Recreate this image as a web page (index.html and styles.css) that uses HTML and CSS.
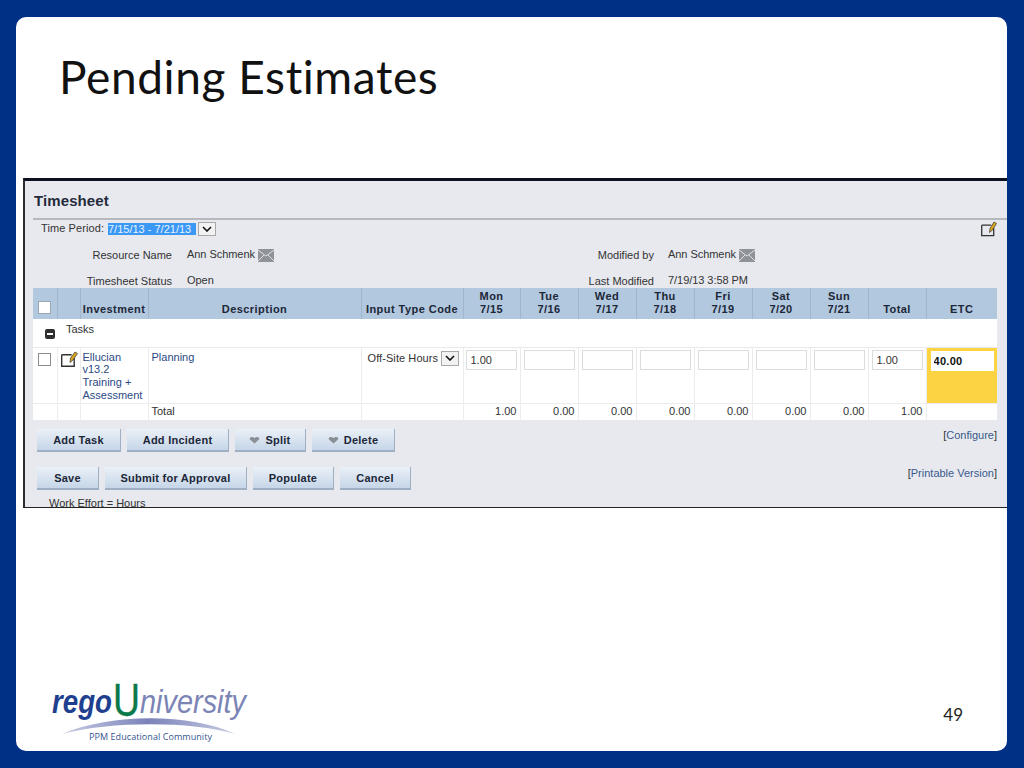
FILE: index.html
```html
<!DOCTYPE html>
<html lang="en">
<head>
<meta charset="utf-8">
<title>Pending Estimates</title>
<link rel="stylesheet" href="styles.css">
</head>
<body>
<main class="slide">
  <h1 class="slide-title">Pending Estimates</h1>
  <section class="panel">
    <h2 class="panel-title">Timesheet</h2>
    <div class="period-row">
      <span class="period-label">Time Period:</span>
      <span class="selected">7/15/13 - 7/21/13</span>
      <span class="arrow-box"><svg width="10" height="6" viewBox="0 0 10 6"><path d="M1 1l4 4 4-4" fill="none" stroke="#111" stroke-width="1.6"/></svg></span>
      <svg class="edit-top" width="16" height="16" viewBox="0 0 16 16"><path d="M.7 4.200h9.500M.7 4.200v10.500h12V7" fill="none" stroke="#333" stroke-width="1.300"/><path d="M8.500 11.500l.5-4 4-6.500 2.500 1.500-4 6.500z" fill="#d9a520" stroke="#333" stroke-width=".7"/></svg>
    </div>
    <div class="meta">
      <span class="m-label">Resource Name</span>
      <span class="m-value">Ann Schmenk <svg class="mail" width="16" height="13" viewBox="0 0 16 13"><rect width="16" height="13" fill="#8f9296"/><path d="M0 1l8 6 8-6M0 12l6-6M16 12l-6-6" fill="none" stroke="#dfe2e6" stroke-width="1"/></svg></span>
      <span class="m-label m-right">Modified by</span>
      <span class="m-value">Ann Schmenk <svg class="mail" width="16" height="13" viewBox="0 0 16 13"><rect width="16" height="13" fill="#8f9296"/><path d="M0 1l8 6 8-6M0 12l6-6M16 12l-6-6" fill="none" stroke="#dfe2e6" stroke-width="1"/></svg></span>
      <span class="m-label">Timesheet Status</span>
      <span class="m-value">Open</span>
      <span class="m-label m-right">Last Modified</span>
      <span class="m-value">7/19/13 3:58 PM</span>
    </div>
    <table class="grid">
      <colgroup>
        <col class="c-check"><col class="c-icon"><col class="c-inv"><col class="c-desc"><col class="c-type">
        <col class="c-day0"><col class="c-day"><col class="c-day"><col class="c-day"><col class="c-day"><col class="c-day"><col class="c-day"><col class="c-day"><col class="c-etc">
      </colgroup>
      <thead>
        <tr>
          <th><span class="check head-check"></span></th><th></th><th>Investment</th><th>Description</th><th>Input Type Code</th>
          <th>Mon<br>7/15</th><th>Tue<br>7/16</th><th>Wed<br>7/17</th><th>Thu<br>7/18</th><th>Fri<br>7/19</th><th>Sat<br>7/20</th><th>Sun<br>7/21</th><th>Total</th><th>ETC</th>
        </tr>
      </thead>
      <tbody>
        <tr class="group-row">
          <td colspan="14"><span class="minus"></span><span class="group-name">Tasks</span></td>
        </tr>
        <tr class="task-row">
          <td><span class="check"></span></td>
          <td class="icon-cell"><svg width="17" height="16" viewBox="0 0 17 16"><path d="M.7 3.700h10M.7 3.700v11.500h12.500V7" fill="none" stroke="#333" stroke-width="1.400"/><path d="M9 11.500l.5-4.500 4.500-6 2.500 1.500-4.500 6.500z" fill="#d9a520" stroke="#333" stroke-width=".7"/></svg></td>
          <td class="link inv">Ellucian v13.2 Training + Assessment</td>
          <td class="link desc">Planning</td>
          <td class="type-cell"><span class="type-value">Off-Site Hours</span><span class="arrow-box"><svg width="10" height="6" viewBox="0 0 10 6"><path d="M1 1l4 4 4-4" fill="none" stroke="#111" stroke-width="1.6"/></svg></span></td>
          <td class="in in-first"><input class="num" value="1.00"></td>
          <td class="in"><input class="num"></td>
          <td class="in"><input class="num"></td>
          <td class="in"><input class="num"></td>
          <td class="in"><input class="num"></td>
          <td class="in"><input class="num"></td>
          <td class="in"><input class="num"></td>
          <td class="in"><input class="num" value="1.00"></td>
          <td class="etc"><input class="num num-etc" value="40.00"></td>
        </tr>
        <tr class="total-row">
          <td></td><td></td><td></td><td class="total-label">Total</td><td></td>
          <td>1.00</td><td>0.00</td><td>0.00</td><td>0.00</td><td>0.00</td><td>0.00</td><td>0.00</td><td>1.00</td><td class="blank"></td>
        </tr>
      </tbody>
    </table>
    <div class="actions first">
      <div class="btns">
        <button class="btn w-add">Add Task</button>
        <button class="btn w-inc">Add Incident</button>
        <button class="btn w-split"><svg class="heart" width="11" height="8" viewBox="0 0 11 8"><path d="M5.500 7.500L1 3.500C0 2 2 .5 3.500 1L5.500 2 7.500 1C9 .5 11 2 10 3.500z" fill="#8a8f96"/></svg>Split</button>
        <button class="btn w-del"><svg class="heart" width="11" height="8" viewBox="0 0 11 8"><path d="M5.500 7.500L1 3.500C0 2 2 .5 3.500 1L5.500 2 7.500 1C9 .5 11 2 10 3.500z" fill="#8a8f96"/></svg>Delete</button>
      </div>
      <a class="side-link">[<span>Configure</span>]</a>
    </div>
    <div class="actions second">
      <div class="btns">
        <button class="btn w-save">Save</button>
        <button class="btn w-submit">Submit for Approval</button>
        <button class="btn w-pop">Populate</button>
        <button class="btn w-cancel">Cancel</button>
      </div>
      <a class="side-link">[<span>Printable Version</span>]</a>
    </div>
    <p class="note">Work Effort = Hours</p>
  </section>
  <footer class="foot">
    <svg class="logo" width="200" height="80" viewBox="0 -12 200 80">
      <defs>
        <linearGradient id="arc" x1="0" x2="1" y1="0" y2="0">
          <stop offset="0" stop-color="#c9cde3"/><stop offset=".5" stop-color="#7a82ba"/><stop offset="1" stop-color="#c9cde3"/>
        </linearGradient>
      </defs>
      <path d="M11 54C60 33 140 33 184 54 140 41 60 41 11 54z" fill="url(#arc)"/>
      <text class="logo-rego" x="1" y="33" textLength="60" lengthAdjust="spacingAndGlyphs">rego</text>
      <text class="logo-u" x="62" y="36" textLength="27" lengthAdjust="spacingAndGlyphs">U</text>
      <text class="logo-rest" x="89" y="33" textLength="106" lengthAdjust="spacingAndGlyphs">niversity</text>
      <text class="logo-sub" x="38" y="60" textLength="123">PPM Educational Community</text>
    </svg>
    <span class="page-no">49</span>
  </footer>
</main>
</body>
</html>
```

FILE: styles.css
```css
* { box-sizing: border-box; }
html, body { margin: 0; height: 100%; }
body {
  background: #002f86;
  overflow: hidden;
  padding: 17px 17px 17px 16px;
  font-family: "Liberation Sans", Arial, sans-serif;
}
.slide {
  height: 734px;
  background: #fff;
  border-radius: 10px;
  display: flex;
  flex-direction: column;
  overflow: hidden;
}
.slide-title {
  margin: 0;
  padding: 31px 0 0 43px;
  height: 161px;
  font: 400 46px/58px Lato, "Open Sans", sans-serif;
  color: #111;
  letter-spacing: .6px;
}
.panel {
  margin-left: 7px;
  height: 330px;
  background: #e7e9ef;
  border-top: 3px solid #0d1020;
  border-left: 2px solid #2a2c30;
  border-bottom: 1px solid #222;
  padding-left: 8px;
  overflow: hidden;
  font-size: 11px;
  color: #333;
}
.panel-title {
  margin: 0;
  height: 39px;
  padding: 11px 0 0 1px;
  font: 700 15px/17px "Liberation Sans", Arial, sans-serif;
  letter-spacing: .1px;
  color: #252b3a;
  border-bottom: 2px solid #b5b8bc;
}
.period-row {
  display: flex;
  align-items: center;
  height: 15px;
  margin-top: 1px;
  padding-left: 8px;
  width: 964px;
  line-height: 13px;
}
.period-label { width: 67px; letter-spacing: .1px; }
.selected {
  background: #3b98f5;
  color: #e8f2ff;
  width: 88px;
  height: 12px;
  line-height: 12px;
  white-space: nowrap;
}
.arrow-box {
  display: inline-flex;
  align-items: center;
  justify-content: center;
  width: 18px;
  height: 14px;
  margin-left: 2px;
  background: #f2f2f2;
  border: 1px solid #a8a8a8;
}
.edit-top { margin-left: auto; margin-top: 1px; }
.meta {
  display: grid;
  grid-template-columns: 139px 281px 170px auto;
  column-gap: 15px;
  grid-auto-rows: 14px;
  row-gap: 12px;
  padding-top: 11px;
  height: 52px;
  width: 964px;
  line-height: 14px;
}
.m-label { text-align: right; padding-top: 1px; white-space: nowrap; }
.m-right { grid-column: 3; margin-right: -1px; }
.m-value { display: flex; align-items: flex-start; gap: 3px; white-space: nowrap; letter-spacing: -.05px; height: 16px; }
.mail { margin-top: 2px; }
.grid {
  table-layout: fixed;
  border-collapse: collapse;
  width: 964px;
  background: #fff;
  font-size: 11px;
}
.c-check { width: 24px; }
.c-icon { width: 23px; }
.c-inv { width: 68px; }
.c-desc { width: 213px; }
.c-type { width: 102px; }
.c-day0 { width: 57px; }
.c-day { width: 58px; }
.c-etc { width: 71px; }
.grid th {
  height: 31px;
  padding: 0 0 3px;
  background: #b2c8de;
  border-left: 1px solid #9fb6cd;
  font-weight: 700;
  line-height: 13px;
  letter-spacing: .45px;
  color: #1c2738;
  vertical-align: bottom;
  text-align: center;
  white-space: nowrap;
}
.grid th:first-child { border-left: 0; }
.check {
  display: block;
  width: 13px;
  height: 13px;
  margin-left: 5px;
  background: #fff;
  border: 1px solid #8c8c8c;
}
.head-check { margin-bottom: 2px; border-color: #9aa7b5; }
.group-row td { height: 28px; padding: 0; border-bottom: 1px solid #e9e9e9; vertical-align: top; }
.minus {
  display: inline-block;
  position: relative;
  width: 10px;
  height: 10px;
  margin: 10px 0 0 12px;
  background: #2f2f2f;
  border-radius: 2px;
  vertical-align: top;
}
.minus::after {
  content: "";
  position: absolute;
  left: 2px;
  right: 2px;
  top: 4px;
  height: 2px;
  background: #fff;
}
.group-name { display: inline-block; margin: 4px 0 0 11px; vertical-align: top; line-height: 13px; }
.task-row td {
  height: 56px;
  padding: 0;
  vertical-align: top;
  border-left: 1px solid #ececec;
  border-bottom: 1px solid #ececec;
}
.task-row td:first-child, .total-row td:first-child { border-left: 0; }
.task-row .check { margin-top: 5px; }
.icon-cell svg { display: block; margin: 3px 0 0 3px; }
.link { color: #2b4a85; line-height: 12.700px; }
.inv { padding: 3px 2px 0 2px !important; }
.desc { padding: 3px 0 0 3px !important; }
.type-cell { white-space: nowrap; padding: 3px 0 0 6px !important; }
.type-value {
  display: inline-block;
  width: 73px;
  height: 15px;
  line-height: 14px;
  vertical-align: top;
  background: #fff;
  letter-spacing: .08px;
}
.type-cell .arrow-box { vertical-align: top; margin-left: 0; height: 15px; }
.in { text-align: left; }
.in .num { margin: 2px 0 0 3px; }
.in-first .num { margin-left: 2px; }
.num {
  display: block;
  width: 51px;
  height: 20px;
  padding: 1px 4px 0;
  border: 1px solid #dcdcdc;
  background: #fff;
  font: 11px "Liberation Sans", Arial, sans-serif;
  color: #333;
}
.etc { background: #fcd443; }
.num-etc {
  width: 63px;
  margin: 3px 0 0 4px;
  border: 0;
  padding-left: 3px;
  font-weight: 700;
  color: #111;
  letter-spacing: .3px;
}
.total-row td {
  height: 17px;
  padding: 0 3px 0 0;
  border-left: 1px solid #ececec;
  text-align: right;
  line-height: 13px;
}
.total-row .total-label { text-align: left; padding-left: 3px; }
.total-row .blank { background: #fff; }
.actions {
  display: flex;
  justify-content: space-between;
  align-items: flex-start;
  width: 964px;
  padding-left: 4px;
}
.first { margin-top: 9px; height: 38px; }
.second { height: 30px; }
.btns { display: flex; gap: 6px; }
.btn {
  display: flex;
  align-items: center;
  justify-content: center;
  gap: 5px;
  height: 23px;
  padding: 0;
  border: 0;
  border-right: 1px solid #9fb0c4;
  border-bottom: 2px solid #9fb0c4;
  background: linear-gradient(#eaf0f7, #c6d6e8);
  font: 700 11px "Liberation Sans", Arial, sans-serif;
  letter-spacing: .25px;
  color: #1c2738;
}
.w-add { width: 84px; }
.w-inc { width: 102px; }
.w-split { width: 71px; }
.w-del { width: 83px; }
.w-save { width: 62px; }
.w-submit { width: 142px; }
.w-pop { width: 81px; }
.w-cancel { width: 71px; }
.side-link { color: #333; line-height: 13px; margin-top: 0; }
.side-link span { color: #3a5a8c; }
.note { margin: 0 0 0 16px; line-height: 13px; white-space: nowrap; }
.foot {
  flex: 1;
  display: flex;
  justify-content: space-between;
  align-items: flex-start;
  padding: 160px 44px 0 35px;
}
.logo { display: block; }
.logo-rego { font: italic 700 33px "Liberation Sans", Arial, sans-serif; fill: #1f3f8f; }
.logo-u { font: 400 47px "Liberation Sans", Arial, sans-serif; fill: #0b7a4a; stroke: #0b7a4a; stroke-width: .4px; }
.logo-rest { font: italic 400 33px "Liberation Sans", Arial, sans-serif; fill: #7c84b6; }
.logo-sub { font: 400 9px "Open Sans", sans-serif; fill: #34558f; }
.page-no { font: 400 17px/20px Lato, sans-serif; color: #222; margin-top: 37px; }
```
